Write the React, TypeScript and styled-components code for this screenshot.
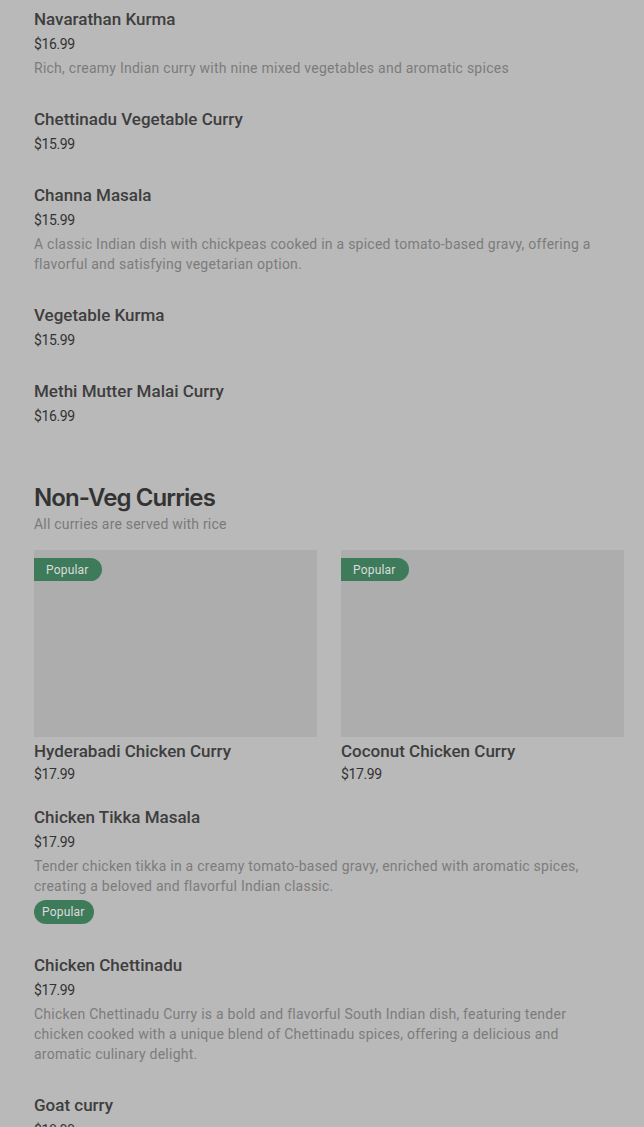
import React from "react";
import styled, { createGlobalStyle } from "styled-components";

const Global = createGlobalStyle`
  html, body { margin: 0; padding: 0; background: #b9b9b9; }
  body { font-family: Roboto, "Liberation Sans", sans-serif; -webkit-font-smoothing: antialiased; }
`;

const Page = styled.div`
  padding: 7px 20px 0 34px;
  display: flex;
  flex-direction: column;
`;

const List = styled.div`
  display: flex;
  flex-direction: column;
  gap: 29px;
`;

const Item = styled.div`
  display: flex;
  flex-direction: column;
`;

const Title = styled.div`
  font-size: 17px;
  line-height: 24px;
  font-weight: 500;
  color: #3e3e3e;
`;

const Price = styled.div<{ $tight?: boolean }>`
  font-size: 14px;
  line-height: 20px;
  color: #333;
  margin-top: ${(p) => (p.$tight ? "1px" : "3px")};
  letter-spacing: -0.4px;
`;

const Desc = styled.div`
  font-size: 14px;
  line-height: 20px;
  color: #7c7c7c;
  margin-top: 4px;
  max-width: 570px;
  letter-spacing: 0.25px;
`;

const Section = styled.section`
  margin-top: 56px;
  display: flex;
  flex-direction: column;
`;

const Heading = styled.h2`
  margin: 0;
  font-size: 24px;
  line-height: 32px;
  font-weight: 600;
  letter-spacing: -0.9px;
  color: #333;
  font-family: Inter, Roboto, sans-serif;
`;

const Sub = styled.div`
  font-size: 14px;
  line-height: 20px;
  color: #7a7a7a;
  letter-spacing: 0.2px;
`;

const Grid = styled.div`
  margin-top: 16px;
  display: grid;
  grid-template-columns: 283px 283px;
  column-gap: 24px;
`;

const Card = styled.div`
  display: flex;
  flex-direction: column;
`;

const ImageBox = styled.div`
  position: relative;
  height: 187px;
  background: #adadad;
  margin-bottom: 2px;
`;

const Badge = styled.span<{ $corner?: boolean }>`
  display: inline-flex;
  align-items: center;
  font-size: 12px;
  letter-spacing: 0.2px;
  color: #dcdcdc;
  background: #3e7b5b;
  ${(p) =>
    p.$corner
      ? `position: absolute; top: 8px; left: 0; height: 23px; padding: 0 13px 0 12px; border-radius: 0 12px 12px 0;`
      : `align-self: flex-start; margin-top: 4px; padding: 0 9px 0 8px; height: 24px; border-radius: 12px;`}
`;

const Rest = styled.div`
  margin-top: 21px;
`;

const veg = [
  { name: "Navarathan Kurma", price: "$16.99", desc: "Rich, creamy Indian curry with nine mixed vegetables and aromatic spices" },
  { name: "Chettinadu Vegetable Curry", price: "$15.99" },
  { name: "Channa Masala", price: "$15.99", desc: "A classic Indian dish with chickpeas cooked in a spiced tomato-based gravy, offering a flavorful and satisfying vegetarian option." },
  { name: "Vegetable Kurma", price: "$15.99" },
  { name: "Methi Mutter Malai Curry", price: "$16.99" },
];

const nonVeg = [
  { name: "Chicken Tikka Masala", price: "$17.99", desc: "Tender chicken tikka in a creamy tomato-based gravy, enriched with aromatic spices, creating a beloved and flavorful Indian classic.", popular: true },
  { name: "Chicken Chettinadu", price: "$17.99", desc: "Chicken Chettinadu Curry is a bold and flavorful South Indian dish, featuring tender chicken cooked with a unique blend of Chettinadu spices, offering a delicious and aromatic culinary delight." },
  { name: "Goat curry", price: "$18.99" },
];

type Dish = { name: string; price: string; desc?: string; popular?: boolean };

const DishItem = ({ d }: { d: Dish }) => (
  <Item>
    <Title>{d.name}</Title>
    <Price>{d.price}</Price>
    {d.desc && <Desc>{d.desc}</Desc>}
    {d.popular && <Badge>Popular</Badge>}
  </Item>
);

export default function App() {
  return (
    <>
      <Global />
      <Page>
        <List>
          {veg.map((d) => (
            <DishItem key={d.name} d={d} />
          ))}
        </List>
        <Section>
          <Heading>Non-Veg Curries</Heading>
          <Sub>All curries are served with rice</Sub>
          <Grid>
            {["Hyderabadi Chicken Curry", "Coconut Chicken Curry"].map((n) => (
              <Card key={n}>
                <ImageBox>
                  <Badge $corner>Popular</Badge>
                </ImageBox>
                <Title>{n}</Title>
                <Price $tight>$17.99</Price>
              </Card>
            ))}
          </Grid>
          <Rest>
            <List>
              {nonVeg.map((d) => (
                <DishItem key={d.name} d={d} />
              ))}
            </List>
          </Rest>
        </Section>
      </Page>
    </>
  );
}
